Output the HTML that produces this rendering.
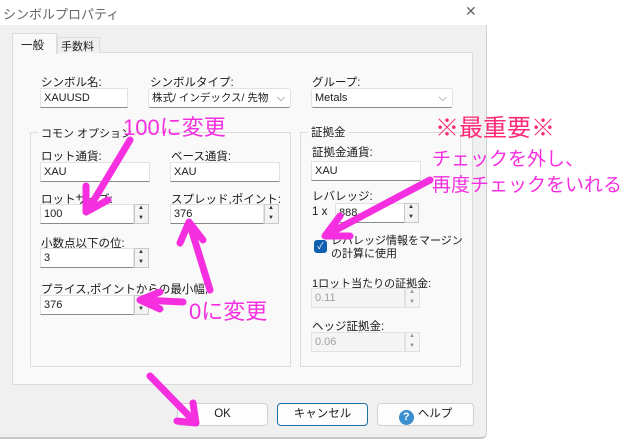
<!DOCTYPE html>
<html><head><meta charset="utf-8"><style>
*{margin:0;padding:0;box-sizing:border-box}
body{width:627px;height:440px;background:#fff;position:relative;overflow:hidden;font-family:"Liberation Sans","Noto Sans CJK JP",sans-serif;font-size:11.5px;color:#1a1a1a}
.a{position:absolute}
.dlg{left:0;top:0;width:487px;height:439px;background:#f0f0f0;border-right:1px solid #d0d0d0;border-bottom:2px solid #c8c8c8;border-radius:0 0 6px 0}
.title{left:0;top:0;width:487px;height:25px;background:#fff}
.panel{left:12px;top:52px;width:461px;height:333px;background:#f9f9f9;border:1px solid #dcdcdc}
.in{background:#fff;border:1px solid #e2e2e2;border-bottom:1px solid #8a8a8a;padding-left:3px;line-height:18px;font-size:11px;height:20px;white-space:nowrap;overflow:hidden}
.dis{background:#f5f5f5;border:1px solid #e2e2e2;color:#a0a0a0;padding-left:3px;line-height:18px;font-size:11px;height:20px}
.sp{width:15px;height:20px;border:1px solid #c8c8c8;background:#f3f3f3}
.sp:before{content:"▲";position:absolute;left:3px;top:0;font-size:6px;color:#333}
.sp:after{content:"▼";position:absolute;left:3px;top:10px;font-size:6px;color:#333}
.gb{border:1px solid #dcdcdc}
.lb{font-size:11.5px;white-space:nowrap}
.btn{height:23px;background:#fdfdfd;border:1px solid #d0d0d0;border-radius:4px;text-align:center;line-height:21px;font-size:11.5px}
.m{color:#f52fe0;white-space:nowrap}
</style></head><body>
<div class="a dlg"></div>
<div class="a title"></div>
<div class="a lb" style="left:3px;top:4px;font-size:13px;color:#666">シンボルプロパティ</div>
<div class="a" style="left:465px;top:3px;font-size:14px;color:#666">✕</div>
<div class="a panel"></div>
<div class="a" style="left:12px;top:33px;width:45px;height:21px;background:#f9f9f9;border:1px solid #dcdcdc;border-bottom:none"></div>
<div class="a lb" style="left:21px;top:37px">一般</div>
<div class="a" style="left:57px;top:37px;width:43px;height:16px;background:#f0f0f0;border:1px solid #dcdcdc;border-bottom:none"></div>
<div class="a lb" style="left:61px;top:38px;font-size:11px">手数料</div>

<div class="a lb" style="left:41px;top:74px">シンボル名:</div>
<div class="a in" style="left:40px;top:88px;width:88px">XAUUSD</div>
<div class="a lb" style="left:150px;top:74px">シンボルタイプ:</div>
<div class="a in" style="left:148px;top:88px;width:143px;border-radius:3px;font-size:10.5px">株式/ インデックス/ 先物<span style="position:absolute;right:5px;color:#666">⌵</span></div>
<div class="a lb" style="left:312px;top:74px">グループ:</div>
<div class="a in" style="left:311px;top:88px;width:142px;border-radius:3px">Metals<span style="position:absolute;right:5px;color:#666">⌵</span></div>

<div class="a gb" style="left:30px;top:132px;width:261px;height:235px"></div>
<div class="a lb" style="left:38px;top:125px;background:#f9f9f9;padding:0 3px;font-size:11px">コモン オプション</div>
<div class="a gb" style="left:300px;top:132px;width:161px;height:235px"></div>
<div class="a lb" style="left:308px;top:124px;background:#f9f9f9;padding:0 3px">証拠金</div>

<div class="a lb" style="left:41px;top:148px">ロット通貨:</div>
<div class="a in" style="left:40px;top:162px;width:110px">XAU</div>
<div class="a lb" style="left:171px;top:148px">ベース通貨:</div>
<div class="a in" style="left:170px;top:162px;width:110px">XAU</div>
<div class="a lb" style="left:41px;top:191px">ロットサイズ:</div>
<div class="a in" style="left:40px;top:204px;width:94px">100</div><div class="a sp" style="left:134px;top:204px"></div>
<div class="a lb" style="left:171px;top:191px">スプレッド,ポイント:</div>
<div class="a in" style="left:170px;top:204px;width:94px">376</div><div class="a sp" style="left:264px;top:204px"></div>
<div class="a lb" style="left:41px;top:235px">小数点以下の位:</div>
<div class="a in" style="left:40px;top:248px;width:94px">3</div><div class="a sp" style="left:134px;top:248px"></div>
<div class="a lb" style="left:41px;top:281px">プライス,ポイントからの最小幅,</div>
<div class="a in" style="left:40px;top:295px;width:94px">376</div><div class="a sp" style="left:134px;top:295px"></div>

<div class="a lb" style="left:312px;top:144px">証拠金通貨:</div>
<div class="a in" style="left:311px;top:161px;width:110px">XAU</div>
<div class="a lb" style="left:312px;top:188px">レバレッジ:</div>
<div class="a lb" style="left:312px;top:206px">1 x</div>
<div class="a in" style="left:335px;top:203px;width:70px">888</div><div class="a sp" style="left:404px;top:203px"></div>
<div class="a" style="left:314px;top:240px;width:13px;height:13px;background:#1060b0;border-radius:3px;color:#fff;font-size:9px;text-align:center;line-height:13px">✓</div>
<div class="a lb" style="left:331px;top:235px;line-height:13px;font-size:11px">レバレッジ情報をマージン<br>の計算に使用</div>
<div class="a lb" style="left:312px;top:275px;font-size:11px">1ロット当たりの証拠金:</div>
<div class="a dis" style="left:311px;top:288px;width:94px">0.11</div><div class="a sp" style="left:405px;top:288px;opacity:.5"></div>
<div class="a lb" style="left:312px;top:318px">ヘッジ証拠金:</div>
<div class="a dis" style="left:311px;top:332px;width:94px">0.06</div><div class="a sp" style="left:405px;top:332px;opacity:.5"></div>

<div class="a btn" style="left:177px;top:403px;width:91px">OK</div>
<div class="a btn" style="left:277px;top:403px;width:91px;border-color:#1d6fa8">キャンセル</div>
<div class="a btn" style="left:377px;top:403px;width:97px"><span style="display:inline-block;width:15px;height:15px;border-radius:50%;background:#3a8fd0;color:#fff;font-size:11px;line-height:15px;font-weight:bold;vertical-align:-3px;margin-right:4px">?</span>ヘルプ</div>

<div class="a m" style="left:123px;top:110px;font-size:22px">100に変更</div>
<div class="a m" style="left:189px;top:294px;font-size:22px">0に変更</div>
<div class="a m" style="left:435px;top:108px;font-size:24px;color:#ff2a77">※最重要※</div>
<div class="a m" style="left:432px;top:144px;font-size:19px">チェックを外し、</div>
<div class="a m" style="left:432px;top:170px;font-size:19px">再度チェックをいれる</div>

<svg class="a" style="left:0;top:0" width="627" height="440">
<g stroke="#f52fe0" stroke-width="7" stroke-linecap="round" stroke-linejoin="round" fill="none">
<path d="M130 140 L88 210 M86 186 L86 212 L108 200"/>
<path d="M210 290 L190 225 M180 243 L189 222 L203 240"/>
<path d="M183 302 L142 300 M160 292 L140 300 L160 309"/>
<path d="M430 180 L330 233 M340 216 L325 236 L350 236"/>
<path d="M150 376 L193 420 M177 421 L196 423 L193 403"/>
</g></svg>
</body></html>
